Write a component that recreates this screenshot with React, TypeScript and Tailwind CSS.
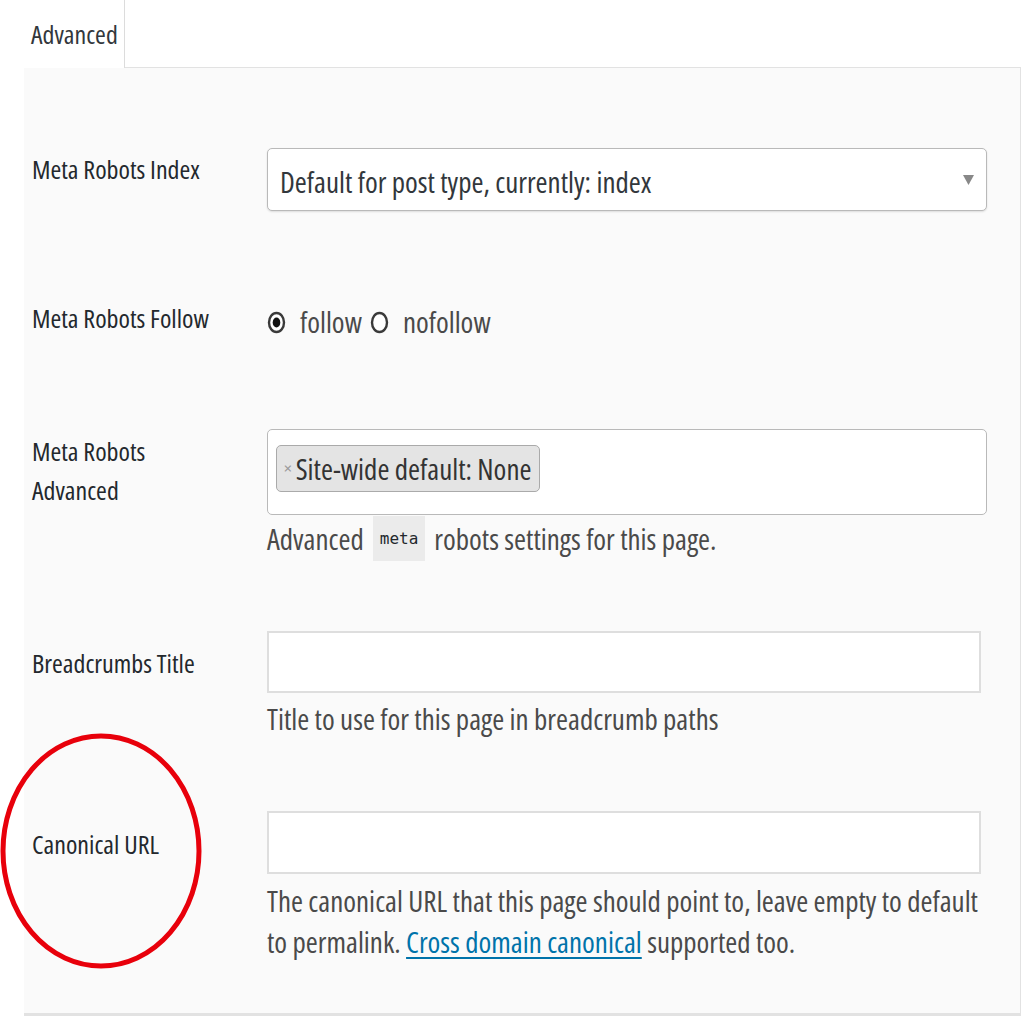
import React from "react";

const font = { fontFamily: '"Open Sans", "Noto Sans", sans-serif' };

function Radio({ checked }: { checked?: boolean }) {
  return (
    <svg width="19" height="23" viewBox="0 0 19 23" className="shrink-0">
      <ellipse cx="9.5" cy="11.5" rx="7.5" ry="9.5" fill="#fff" stroke="#3a3a3a" strokeWidth="2.4" />
      {checked && <ellipse cx="9.5" cy="11.5" rx="3.8" ry="5" fill="#111" />}
    </svg>
  );
}

export default function App() {
  return (
    <div
      className="relative w-[1024px] h-[1024px] bg-white overflow-hidden font-stretch-condensed text-[29px] text-[#23282d]"
      style={font}
    >
      {/* Tab */}
      <div className="pl-[24px]">
        <div className="relative z-10 -mb-px w-[101px] h-[68px] bg-white border-r border-[#dcdcdc] pl-[7px] pt-[14px] text-[26px] text-[#32373c] leading-[40px]">
          Advanced
        </div>
      </div>

      {/* Panel */}
      <div className="ml-[24px] w-[997px] h-[949px] bg-[#fafafa] border-t border-r border-b-[3px] border-[#e2e2e2] pl-[8px] flex flex-col">
        {/* Row 1 */}
        <div className="flex mt-[80px]">
          <div className="w-[235px] pt-[1px] text-[26px] leading-[40px]">Meta Robots Index</div>
          <div className="w-[720px] h-[63px] bg-white border border-[#b9b9b9] rounded-[5px] shadow-[0_1px_2px_rgba(0,0,0,0.12)] flex items-center justify-between pl-[12px] pr-[12px] text-[#32373c]">
            <span className="mt-[4px]">Default for post type, currently: index</span>
            <svg width="11" height="11" viewBox="0 0 10 10">
              <path d="M0 1 L10 1 L5 10 Z" fill="#888" />
            </svg>
          </div>
        </div>

        {/* Row 2 */}
        <div className="flex mt-[91px] h-[40px] items-center">
          <div className="w-[235px] -mt-[8px] text-[26px] leading-[40px]">Meta Robots Follow</div>
          <div className="flex items-center text-[#4a4a4a]">
            <Radio checked />
            <span className="ml-[14px]">follow</span>
            <span className="ml-[8px]"><Radio /></span>
            <span className="ml-[14px]">nofollow</span>
          </div>
        </div>

        {/* Row 3 */}
        <div className="flex mt-[87px]">
          <div className="w-[235px] text-[26px] leading-[39px] pt-[3px]">
            Meta Robots
            <br />
            Advanced
          </div>
          <div className="flex flex-col">
            <div className="w-[720px] h-[86px] bg-white border border-[#b9b9b9] rounded-[5px] pl-[8px] pt-[12px]">
              <div className="inline-flex items-center h-[47px] bg-[#e4e4e4] border border-[#aaa] rounded-[5px] pl-[7px] pr-[8px] text-[#333]">
                <span className="text-[#999] text-[18px] mr-[4px]">×</span>
                <span>Site-wide default: None</span>
              </div>
            </div>
            <div className="flex items-center h-[47px] text-[#4a4a4a]">
              <span>Advanced</span>
              <span
                className="mx-[9px] h-[45px] flex items-center px-[7px] bg-[#ebebeb] text-[16px] text-[#23282d]"
                style={{ fontFamily: '"DejaVu Sans Mono", "Liberation Mono", monospace' }}
              >
                meta
              </span>
              <span>robots settings for this page.</span>
            </div>
          </div>
        </div>

        {/* Row 4 */}
        <div className="flex mt-[69px]">
          <div className="w-[235px] pt-[12px] text-[26px] leading-[40px]">Breadcrumbs Title</div>
          <div className="flex flex-col">
            <div className="w-[714px] h-[62px] bg-white border-2 border-[#dedede]" />
            <div className="leading-[52px] text-[#4a4a4a]">Title to use for this page in breadcrumb paths</div>
          </div>
        </div>

        {/* Row 5 */}
        <div className="flex mt-[66px]">
          <div className="w-[235px] pt-[13px] text-[26px] leading-[40px]">Canonical URL</div>
          <div className="flex flex-col">
            <div className="w-[714px] h-[63px] bg-white border-2 border-[#dedede]" />
            <div className="w-[720px] leading-[41px] pt-[6px] text-[#4a4a4a]">
              <div>The canonical URL that this page should point to, leave empty to default</div>
              <div>
                to permalink.{" "}
                <a className="text-[#0073aa] underline underline-offset-[4px]" href="#">
                  Cross domain canonical
                </a>{" "}
                supported too.
              </div>
            </div>
          </div>
        </div>
      </div>

      {/* Red annotation circle */}
      <svg className="absolute left-[0px] top-[733px]" width="204" height="236" viewBox="0 0 204 236">
        <ellipse cx="101" cy="118" rx="98" ry="115" fill="none" stroke="#e8000b" strokeWidth="5" />
      </svg>
    </div>
  );
}
